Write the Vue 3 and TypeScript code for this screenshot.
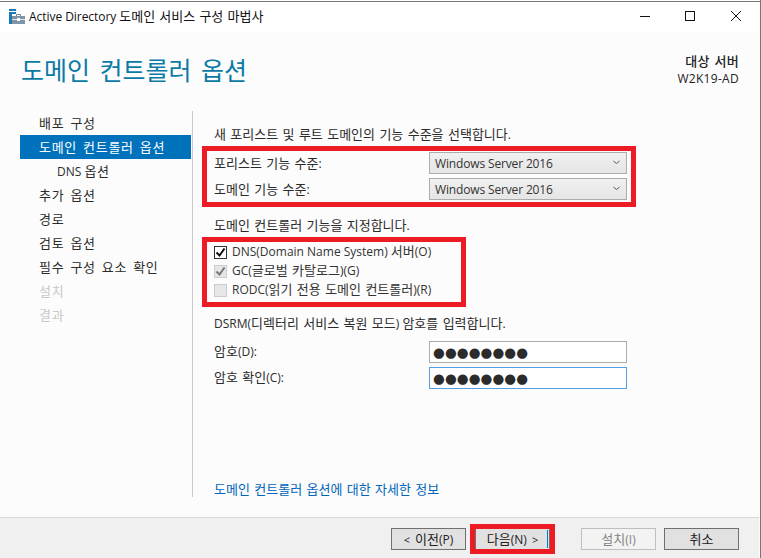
<script setup lang="ts">
import { h } from 'vue'

const parts = (text: string) =>
  text.split(/([\uAC00-\uD7A3]+(?: [\uAC00-\uD7A3]+)*)/).filter(Boolean)

const T = (props: { t: string }) =>
  parts(props.t).map((s) =>
    h('span', { class: /[\uAC00-\uD7A3]/.test(s) ? 'ko' : 'la' }, s),
  )
T.props = ['t']

const navItems = [
  { label: '배포 구성' },
  { label: '도메인 컨트롤러 옵션', active: true },
  { label: 'DNS 옵션', sub: true },
  { label: '추가 옵션' },
  { label: '경로' },
  { label: '검토 옵션' },
  { label: '필수 구성 요소 확인' },
  { label: '설치', off: true },
  { label: '결과', off: true },
]
const selects = [
  { label: '포리스트 기능 수준:', value: 'Windows Server 2016' },
  { label: '도메인 기능 수준:', value: 'Windows Server 2016' },
]
</script>

<template>
  <div class="win">
    <header class="title">
      <svg class="appicon" width="16" height="16" viewBox="0 0 16 16">
        <rect x="0" y="1" width="7" height="2" fill="#1e78b4" />
        <rect x="0" y="4" width="7" height="2" fill="#1e78b4" />
        <rect x="0" y="6" width="3" height="10" fill="#1e78b4" />
        <path d="M7.5 8V6.5h4V8" fill="none" stroke="#6f8494" />
        <rect x="3" y="8" width="13" height="8" fill="#7f95a5" />
        <rect x="3" y="11" width="13" height="1" fill="#dfe6ea" />
        <rect x="8" y="10" width="3" height="3" fill="#fff" />
      </svg>
      <span class="title-text"><T t="Active Directory 도메인 서비스 구성 마법사" /></span>
      <svg class="ctl" width="120" height="16" viewBox="0 0 120 16">
        <path d="M1 8.5h10" stroke="#111" />
        <rect x="46.5" y="3.5" width="9" height="9" fill="none" stroke="#111" />
        <path d="M92 3l10 10M102 3L92 13" stroke="#111" fill="none" />
      </svg>
    </header>

    <section class="head">
      <h1>도메인 컨트롤러 옵션</h1>
      <div class="target">
        <div><T t="대상 서버" /></div>
        <div><T t="W2K19-AD" /></div>
      </div>
    </section>

    <main class="main">
      <nav class="nav">
        <div
          v-for="n in navItems"
          :key="n.label"
          class="nav-item"
          :class="{ active: n.active, sub: n.sub, off: n.off }"
        ><T :t="n.label" /></div>
      </nav>
      <div class="divider"></div>
      <div class="content">
        <p class="t1"><T t="새 포리스트 및 루트 도메인의 기능 수준을 선택합니다." /></p>
        <div class="form f1">
          <template v-for="s in selects" :key="s.label">
            <span class="lab top"><T :t="s.label" /></span>
            <div class="select">
              <span>{{ s.value }}</span>
              <svg width="7" height="5" viewBox="0 0 7 5"><path d="M.5 1l3 2.5 3-2.5" fill="none" stroke="#555" /></svg>
            </div>
          </template>
        </div>
        <p class="t2"><T t="도메인 컨트롤러 기능을 지정합니다." /></p>
        <div class="checks">
          <div class="check">
            <span class="box on">
              <svg width="11" height="11" viewBox="0 0 11 11"><path d="M1.5 5.5l3 3 5-7" fill="none" stroke="#111" stroke-width="2" /></svg>
            </span>
            <span class="cl"><T t="DNS(Domain Name System) 서버(O)" /></span>
          </div>
          <div class="check">
            <span class="box dis">
              <svg width="11" height="11" viewBox="0 0 11 11"><path d="M1.5 5.5l3 3 5-7" fill="none" stroke="#777" stroke-width="2" /></svg>
            </span>
            <span class="cl"><T t="GC(글로벌 카탈로그)(G)" /></span>
          </div>
          <div class="check">
            <span class="box dis"></span>
            <span class="cl"><T t="RODC(읽기 전용 도메인 컨트롤러)(R)" /></span>
          </div>
        </div>
        <p class="t3"><T t="DSRM(디렉터리 서비스 복원 모드) 암호를 입력합니다." /></p>
        <div class="form f2">
          <span class="lab"><T t="암호(D):" /></span>
          <div class="pw">●●●●●●●●</div>
          <span class="lab"><T t="암호 확인(C):" /></span>
          <div class="pw focus">●●●●●●●●</div>
        </div>
        <a class="link"><T t="도메인 컨트롤러 옵션에 대한 자세한 정보" /></a>
      </div>
    </main>

    <footer class="foot">
      <button class="btn"><small>&lt;</small> <T t="이전(P)" /></button>
      <button class="btn next"><T t="다음(N)" /> <small>&gt;</small><i class="caret"></i></button>
      <button class="btn install" disabled><T t="설치(I)" /></button>
      <button class="btn cancel"><T t="취소" /></button>
    </footer>

    <div class="mark m1"></div>
    <div class="mark m2"></div>
    <div class="mark m3"></div>
  </div>
</template>

<style>
html, body { margin: 0; background: #fff; }
.ko { font-size: 13px; word-spacing: 1px; }
.la { font-size: 12px; }
.nav-item .ko { letter-spacing: .7px; word-spacing: 2px; }
</style>

<style scoped>
.win {
  position: relative;
  width: 761px;
  height: 558px;
  box-sizing: border-box;
  padding-right: 1px;
  overflow: hidden;
  display: flex;
  flex-direction: column;
  background: #fcfcfc;
  color: #2b2b2b;
  font: 12px/16px "Open Sans", "Noto Sans CJK KR", sans-serif;
  border-right: 1px solid #777;
}
.win::before {
  content: "";
  position: absolute;
  left: 0;
  right: 0;
  top: 1px;
  height: 1px;
  background: #777;
}
.title {
  height: 32px;
  flex: none;
  background: #fff;
  display: flex;
  align-items: center;
  padding-left: 9px;
  box-sizing: border-box;
  color: #111;
}
.appicon { flex: none; margin-right: 4px; }
.title-text { flex: 1; padding-top: 1px; letter-spacing: -.05px; }
.ctl { flex: none; }
.head {
  height: 79px;
  flex: none;
  display: flex;
  justify-content: space-between;
  padding: 0 20px 0 21px;
  box-sizing: border-box;
}
h1 {
  margin: 21px 0 0;
  font-size: 25px;
  line-height: 34px;
  font-weight: 400;
  color: #0c7aa6;
  word-spacing: 3px;
}
.target {
  margin-top: 21px;
  text-align: right;
  line-height: 17px;
  color: #222;
  font-weight: 500;
  letter-spacing: .3px;
}
.main {
  height: 386px;
  flex: none;
  display: flex;
}
.nav { width: 171px; margin-left: 20px; flex: none; }
.nav-item { height: 24px; line-height: 25px; padding-left: 19px; }
.nav-item.active { background: #0072bc; color: #fff; }
.nav-item.sub { padding-left: 37px; }
.nav-item.off { color: #c8c8c8; }
.divider { width: 1px; background: #c8c8c8; margin-left: 1px; flex: none; }
.content {
  flex: 1;
  margin-left: 21px;
  display: flex;
  flex-direction: column;
}
p { margin: 0; height: 16px; }
.t1 { margin-top: 15px; }
.form {
  display: grid;
  grid-template-columns: 215px 198px;
  grid-auto-rows: 22px;
  align-items: center;
  row-gap: 4px;
}
.f1 { margin-top: 10px; }
.lab { height: 16px; margin-top: -2px; }
.lab.top { margin-top: 0; }
.select {
  height: 22px;
  box-sizing: border-box;
  border: 1px solid #acacac;
  background: linear-gradient(#f0f0f0, #e5e5e5);
  display: flex;
  align-items: center;
  justify-content: space-between;
  padding: 2px 6px 0 5px;
  color: #333;
  letter-spacing: -.15px;
}
.select svg { margin-top: -3px; }
.t2 { margin-top: 17px; }
.checks { margin-top: 10px; }
.check {
  height: 19px;
  display: flex;
  align-items: center;
  gap: 5px;
  color: #333;
}
.cl { height: 16px; margin-top: -3px; }
.box {
  width: 13px;
  height: 13px;
  box-sizing: border-box;
  display: flex;
  align-items: center;
  justify-content: center;
  flex: none;
}
.box.on { background: #fff; border: 1px solid #333; }
.box.dis { background: #e6e6e6; border: 1px solid #ccc; }
.t3 { margin-top: 15px; }
.f2 { margin-top: 10px; }
.pw {
  height: 22px;
  box-sizing: border-box;
  border: 1px solid #acacac;
  background: #fff;
  padding-left: 3px;
  font: 13.5px/20px "DejaVu Sans", sans-serif;
  color: #2b2b2b;
  letter-spacing: .1px;
  overflow: hidden;
}
.pw.focus { border-color: #569de5; }
.link {
  margin-top: auto;
  height: 16px;
  color: #0066bb;
}
.foot {
  margin-top: 20px;
  flex: 1;
  background: #f0f0f0;
  border-top: 1px solid #d8d8d8;
  display: flex;
  justify-content: flex-end;
  padding: 10px 20px 0 0;
  gap: 8px;
  box-sizing: border-box;
}
.btn {
  width: 75px;
  height: 22px;
  box-sizing: border-box;
  border: 1px solid #707070;
  background: #e1e1e1;
  color: #222;
  font: inherit;
  padding: 1px 0 0;
  position: relative;
  word-spacing: 2px;
}
small { font-size: 11px; }
.next { margin-left: 1px; }
.install {
  margin-left: 23px;
  background: #f3f3f3;
  border-color: #bfbfbf;
  color: #838383;
}
.caret {
  position: absolute;
  right: 1px;
  top: 1px;
  bottom: 1px;
  width: 1px;
  background: #0078d7;
}
.mark {
  position: absolute;
  box-sizing: border-box;
  border: 5px solid #ed1c24;
  pointer-events: none;
}
.m1 { left: 202px; top: 146px; width: 434px; height: 61px; }
.m2 { left: 202px; top: 237px; width: 264px; height: 70px; }
.m3 { left: 470px; top: 524px; width: 85px; height: 30px; }
</style>
